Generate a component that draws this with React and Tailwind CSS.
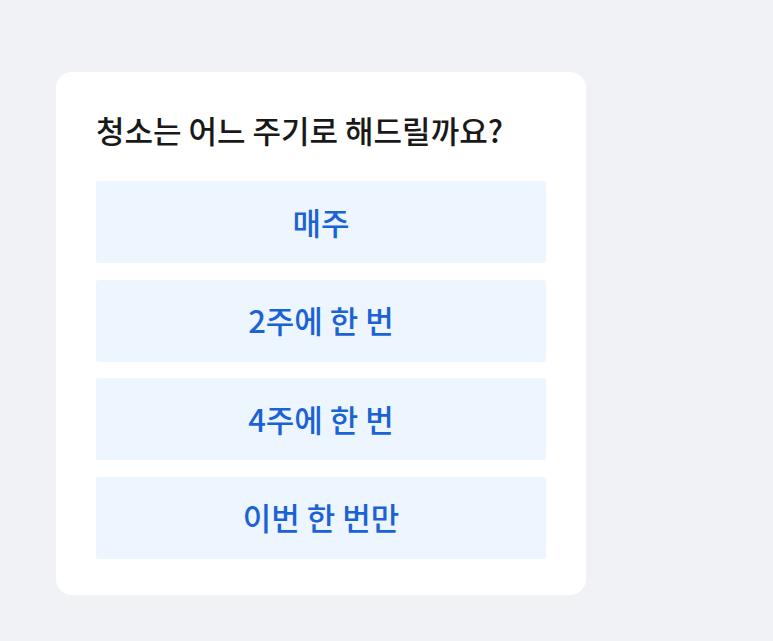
export default function App() {
  const options = ['매주', '2주에 한 번', '4주에 한 번', '이번 한 번만']

  return (
    <div
      className="min-h-screen w-full bg-[#f0f2f6] pt-[72px] pl-[56px]"
      style={{ fontFamily: '"Noto Sans CJK KR", "Noto Sans", sans-serif' }}
    >
      <div className="w-[530px] rounded-2xl bg-white px-10 pt-[37px] pb-[36px]">
        <h2 className="text-[31px] leading-[42px] font-medium text-[#191919]">
          청소는 어느 주기로 해드릴까요?
        </h2>
        <div className="mt-[30px] flex flex-col gap-[16.5px]">
          {options.map((label) => (
            <button
              key={label}
              className="flex h-[82px] w-full items-center justify-center rounded-[3px] bg-[#edf5ff] text-[31px] font-medium text-[#1b63d4]"
            >
              {label}
            </button>
          ))}
        </div>
      </div>
    </div>
  )
}
